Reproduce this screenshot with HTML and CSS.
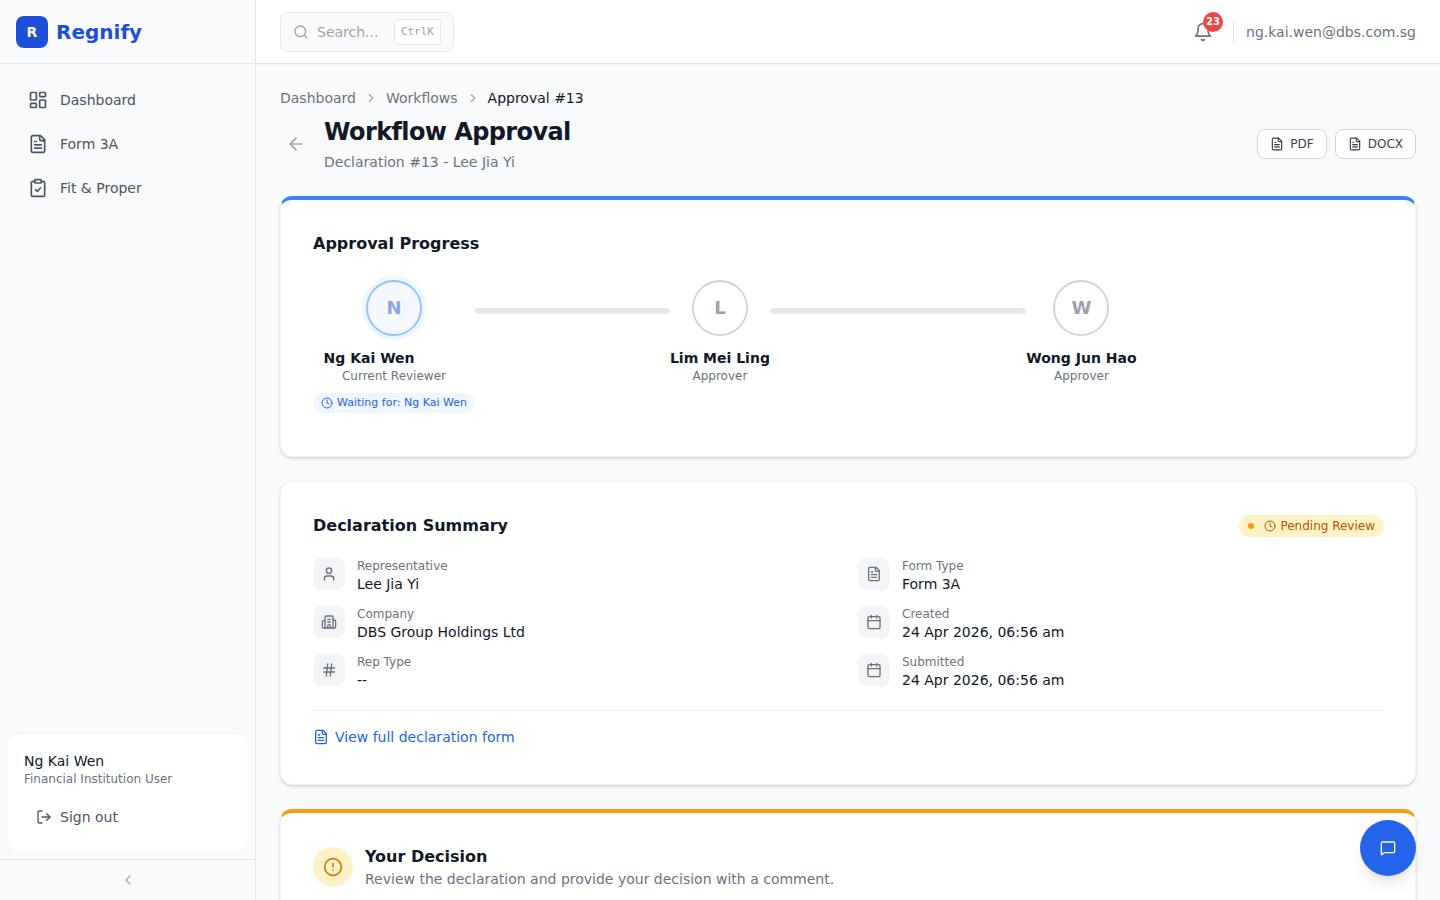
FILE: index.html
```html
<!DOCTYPE html>
<html lang="en">
<head>
    <meta charset="UTF-8">
    <meta name="viewport" content="width=device-width, initial-scale=1.0">
    <title>Workflow Approval | Regnify</title>
    <link rel="stylesheet" href="styles.css">
</head>
<body>
    <svg class="sprite" aria-hidden="true">
        <symbol id="i-dashboard" viewBox="0 0 24 24"><rect x="3" y="3" width="7" height="9" rx="1"/><rect x="14" y="3" width="7" height="5" rx="1"/><rect x="14" y="12" width="7" height="9" rx="1"/><rect x="3" y="16" width="7" height="5" rx="1"/></symbol>
        <symbol id="i-file" viewBox="0 0 24 24"><path d="M15 2H6a2 2 0 0 0-2 2v16a2 2 0 0 0 2 2h12a2 2 0 0 0 2-2V7Z"/><path d="M14 2v4a2 2 0 0 0 2 2h4"/><path d="M10 9H8"/><path d="M16 13H8"/><path d="M16 17H8"/></symbol>
        <symbol id="i-clipboard" viewBox="0 0 24 24"><rect x="8" y="2" width="8" height="4" rx="1"/><path d="M16 4h2a2 2 0 0 1 2 2v14a2 2 0 0 1-2 2H6a2 2 0 0 1-2-2V6a2 2 0 0 1 2-2h2"/><path d="m9 14 2 2 4-4"/></symbol>
        <symbol id="i-search" viewBox="0 0 24 24"><circle cx="11" cy="11" r="8"/><path d="m21 21-4.3-4.3"/></symbol>
        <symbol id="i-bell" viewBox="0 0 24 24"><path d="M6 8a6 6 0 0 1 12 0c0 7 3 9 3 9H3s3-2 3-9"/><path d="M10.3 21a1.94 1.94 0 0 0 3.4 0"/></symbol>
        <symbol id="i-arrow" viewBox="0 0 24 24"><path d="m12 19-7-7 7-7"/><path d="M19 12H5"/></symbol>
        <symbol id="i-right" viewBox="0 0 24 24"><path d="m9 18 6-6-6-6"/></symbol>
        <symbol id="i-left" viewBox="0 0 24 24"><path d="m15 18-6-6 6-6"/></symbol>
        <symbol id="i-clock" viewBox="0 0 24 24"><circle cx="12" cy="12" r="10"/><path d="M12 6v6l4 2"/></symbol>
        <symbol id="i-user" viewBox="0 0 24 24"><path d="M19 21v-2a4 4 0 0 0-4-4H9a4 4 0 0 0-4 4v2"/><circle cx="12" cy="7" r="4"/></symbol>
        <symbol id="i-building" viewBox="0 0 24 24"><path d="M10 12h4"/><path d="M10 8h4"/><path d="M14 21v-3a2 2 0 0 0-4 0v3"/><path d="M6 10H4a2 2 0 0 0-2 2v7a2 2 0 0 0 2 2h16a2 2 0 0 0 2-2v-8a2 2 0 0 0-2-2h-2"/><path d="M6 21V5a2 2 0 0 1 2-2h8a2 2 0 0 1 2 2v16"/></symbol>
        <symbol id="i-hash" viewBox="0 0 24 24"><path d="M4 9h16"/><path d="M4 15h16"/><path d="M10 3 8 21"/><path d="M16 3l-2 18"/></symbol>
        <symbol id="i-calendar" viewBox="0 0 24 24"><path d="M8 2v4"/><path d="M16 2v4"/><rect x="3" y="4" width="18" height="18" rx="2"/><path d="M3 10h18"/></symbol>
        <symbol id="i-logout" viewBox="0 0 24 24"><path d="M9 21H5a2 2 0 0 1-2-2V5a2 2 0 0 1 2-2h4"/><path d="m16 17 5-5-5-5"/><path d="M21 12H9"/></symbol>
        <symbol id="i-alert" viewBox="0 0 24 24"><circle cx="12" cy="12" r="10"/><path d="M12 8v4"/><path d="M12 16h.01"/></symbol>
        <symbol id="i-message" viewBox="0 0 24 24"><path d="M22 17a2 2 0 0 1-2 2H6.828a2 2 0 0 0-1.414.586l-2.202 2.202A.71.71 0 0 1 2 21.286V5a2 2 0 0 1 2-2h16a2 2 0 0 1 2 2z"/></symbol>
    </svg>

    <div class="layout">
        <aside class="sidebar">
            <div class="brand">
                <div class="brand-mark">R</div>
                <span class="brand-name">Regnify</span>
            </div>
            <nav class="nav">
                <a class="nav-item" href="#"><svg class="icon icon-20"><use href="#i-dashboard"/></svg>Dashboard</a>
                <a class="nav-item" href="#"><svg class="icon icon-20"><use href="#i-file"/></svg>Form 3A</a>
                <a class="nav-item" href="#"><svg class="icon icon-20"><use href="#i-clipboard"/></svg>Fit &amp; Proper</a>
            </nav>
            <div class="user-card">
                <div class="user-name">Ng Kai Wen</div>
                <div class="user-role">Financial Institution User</div>
                <a class="sign-out" href="#"><svg class="icon icon-16"><use href="#i-logout"/></svg>Sign out</a>
            </div>
            <div class="collapse"><svg class="icon icon-16"><use href="#i-left"/></svg></div>
        </aside>

        <div class="content">
            <header class="topbar">
                <div class="search">
                    <svg class="icon icon-16"><use href="#i-search"/></svg>
                    <span class="search-text">Search...</span>
                    <kbd class="search-key">CtrlK</kbd>
                </div>
                <div class="topbar-right">
                    <div class="bell">
                        <svg class="icon icon-20"><use href="#i-bell"/></svg>
                        <span class="bell-count">23</span>
                    </div>
                    <div class="topbar-divider"></div>
                    <span class="topbar-email">ng.kai.wen@dbs.com.sg</span>
                </div>
            </header>

            <main class="main">
                <div class="breadcrumb">
                    <a href="#">Dashboard</a>
                    <svg class="icon icon-14"><use href="#i-right"/></svg>
                    <a href="#">Workflows</a>
                    <svg class="icon icon-14"><use href="#i-right"/></svg>
                    <span class="breadcrumb-current">Approval #13</span>
                </div>

                <div class="page-head">
                    <button class="back-btn"><svg class="icon icon-20"><use href="#i-arrow"/></svg></button>
                    <div class="page-title">
                        <h1>Workflow Approval</h1>
                        <p>Declaration #13 - Lee Jia Yi</p>
                    </div>
                    <div class="export">
                        <button class="export-btn"><svg class="icon icon-14"><use href="#i-file"/></svg>PDF</button>
                        <button class="export-btn"><svg class="icon icon-14"><use href="#i-file"/></svg>DOCX</button>
                    </div>
                </div>

                <section class="card card-blue">
                    <h2>Approval Progress</h2>
                    <div class="stepper">
                        <div class="step step-current">
                            <div class="avatar avatar-current">N</div>
                            <div class="step-name">Ng Kai Wen</div>
                            <div class="step-role">Current Reviewer</div>
                            <div class="waiting"><svg class="icon icon-12"><use href="#i-clock"/></svg>Waiting for: Ng Kai Wen</div>
                        </div>
                        <div class="connector connector-a"></div>
                        <div class="step">
                            <div class="avatar">L</div>
                            <div class="step-name">Lim Mei Ling</div>
                            <div class="step-role">Approver</div>
                        </div>
                        <div class="connector connector-b"></div>
                        <div class="step">
                            <div class="avatar">W</div>
                            <div class="step-name">Wong Jun Hao</div>
                            <div class="step-role">Approver</div>
                        </div>
                    </div>
                </section>

                <section class="card">
                    <div class="summary-head">
                        <h2>Declaration Summary</h2>
                        <span class="status"><span class="status-dot"></span><svg class="icon icon-12"><use href="#i-clock"/></svg>Pending Review</span>
                    </div>
                    <div class="summary-grid">
                        <div class="field">
                            <div class="field-icon"><svg class="icon icon-16"><use href="#i-user"/></svg></div>
                            <div><div class="field-label">Representative</div><div class="field-value">Lee Jia Yi</div></div>
                        </div>
                        <div class="field">
                            <div class="field-icon"><svg class="icon icon-16"><use href="#i-file"/></svg></div>
                            <div><div class="field-label">Form Type</div><div class="field-value">Form 3A</div></div>
                        </div>
                        <div class="field">
                            <div class="field-icon"><svg class="icon icon-16"><use href="#i-building"/></svg></div>
                            <div><div class="field-label">Company</div><div class="field-value">DBS Group Holdings Ltd</div></div>
                        </div>
                        <div class="field">
                            <div class="field-icon"><svg class="icon icon-16"><use href="#i-calendar"/></svg></div>
                            <div><div class="field-label">Created</div><div class="field-value">24 Apr 2026, 06:56 am</div></div>
                        </div>
                        <div class="field">
                            <div class="field-icon"><svg class="icon icon-16"><use href="#i-hash"/></svg></div>
                            <div><div class="field-label">Rep Type</div><div class="field-value">--</div></div>
                        </div>
                        <div class="field">
                            <div class="field-icon"><svg class="icon icon-16"><use href="#i-calendar"/></svg></div>
                            <div><div class="field-label">Submitted</div><div class="field-value">24 Apr 2026, 06:56 am</div></div>
                        </div>
                    </div>
                    <div class="summary-foot">
                        <a class="form-link" href="#"><svg class="icon icon-16"><use href="#i-file"/></svg>View full declaration form</a>
                    </div>
                </section>

                <section class="card card-amber">
                    <div class="decision">
                        <div class="decision-icon"><svg class="icon icon-20"><use href="#i-alert"/></svg></div>
                        <div>
                            <h2>Your Decision</h2>
                            <p>Review the declaration and provide your decision with a comment.</p>
                        </div>
                    </div>
                </section>
            </main>
        </div>
    </div>

    <button class="chat-btn"><svg class="icon icon-16"><use href="#i-message"/></svg></button>
</body>
</html>
```

FILE: styles.css
```css
* {
    box-sizing: border-box;
}
html, body {
    height: 100%;
}
body {
    margin: 0;
    overflow: hidden;
    font-family: "DejaVu Sans", sans-serif;
    font-size: 14px;
    line-height: 20px;
    color: #111827;
    background-color: #f9fafb;
}
a {
    color: inherit;
    text-decoration: none;
}
button {
    font-family: inherit;
    cursor: pointer;
}
h1, h2, p {
    margin: 0;
}
.sprite {
    display: none;
}
.icon {
    flex: none;
    display: block;
    fill: none;
    stroke: currentColor;
    stroke-width: 2;
    stroke-linecap: round;
    stroke-linejoin: round;
}
.icon-12 { width: 12px; height: 12px; }
.icon-14 { width: 14px; height: 14px; }
.icon-16 { width: 16px; height: 16px; }
.icon-20 { width: 20px; height: 20px; }

.layout {
    display: flex;
    height: 100vh;
}

/* sidebar */
.sidebar {
    width: 256px;
    flex: none;
    display: flex;
    flex-direction: column;
    background-color: #f9fafb;
    border-right: 1px solid #e5e7eb;
}
.brand {
    height: 64px;
    flex: none;
    display: flex;
    align-items: center;
    gap: 8px;
    padding: 0 16px;
    border-bottom: 1px solid #e5e7eb;
}
.brand-mark {
    width: 32px;
    height: 32px;
    display: flex;
    align-items: center;
    justify-content: center;
    border-radius: 8px;
    background-color: #1d4ed8;
    color: #fff;
    font-weight: bold;
}
.brand-name {
    font-size: 20px;
    line-height: 28px;
    font-weight: bold;
    color: #1d4ed8;
}
.nav {
    flex: 1;
    display: flex;
    flex-direction: column;
    gap: 4px;
    padding: 16px 16px 0;
}
.nav-item {
    height: 40px;
    display: flex;
    align-items: center;
    gap: 12px;
    padding: 0 12px;
    color: #4b5563;
}
.user-card {
    margin: 0 8px 8px;
    padding: 17px 16px 16px;
    height: 117px;
    background-color: #fff;
    border-radius: 12px;
    box-shadow: 0 -1px 0 #f3f4f6;
}
.user-name {
    color: #111827;
}
.user-role {
    font-size: 12px;
    line-height: 16px;
    color: #6b7280;
}
.sign-out {
    display: flex;
    align-items: center;
    gap: 8px;
    height: 40px;
    margin-top: 10px;
    padding: 0 12px;
    color: #4b5563;
}
.collapse {
    height: 41px;
    flex: none;
    display: flex;
    align-items: center;
    justify-content: center;
    border-top: 1px solid #e5e7eb;
    color: #9ca3af;
}

/* top bar */
.content {
    flex: 1;
    min-width: 0;
    display: flex;
    flex-direction: column;
}
.topbar {
    height: 64px;
    flex: none;
    display: flex;
    align-items: center;
    justify-content: space-between;
    padding: 0 24px;
    background-color: #fff;
    border-bottom: 1px solid #e5e7eb;
    box-shadow: 0 1px 2px rgba(0, 0, 0, 0.05);
    position: relative;
}
.search {
    width: 174px;
    height: 40px;
    display: flex;
    align-items: center;
    padding: 0 12px;
    background-color: #f9fafb;
    border: 1px solid #e5e7eb;
    border-radius: 8px;
    color: #9ca3af;
}
.search-text {
    margin-left: 8px;
    flex: 1;
}
.search-key {
    height: 26px;
    display: flex;
    align-items: center;
    padding: 0 6px;
    background-color: #fff;
    border: 1px solid #e5e7eb;
    border-radius: 4px;
    font-family: "DejaVu Sans Mono", monospace;
    font-size: 11px;
}
.topbar-right {
    display: flex;
    align-items: center;
}
.bell {
    position: relative;
    color: #6b7280;
}
.bell-count {
    position: absolute;
    top: -10px;
    right: -10px;
    width: 20px;
    height: 20px;
    display: flex;
    align-items: center;
    justify-content: center;
    border-radius: 50%;
    background-color: #ef4444;
    color: #fff;
    font-size: 10px;
    font-weight: bold;
}
.topbar-divider {
    width: 1px;
    height: 24px;
    margin: 0 12px 0 20px;
    background-color: #e5e7eb;
}
.topbar-email {
    color: #6b7280;
}

/* page head */
.main {
    flex: 1;
    min-height: 0;
    overflow: hidden;
    padding: 24px;
}
.breadcrumb {
    display: flex;
    align-items: center;
    gap: 8px;
    color: #6b7280;
    margin-bottom: 8px;
}
.breadcrumb .icon {
    color: #9ca3af;
}
.breadcrumb-current {
    color: #111827;
}
.page-head {
    display: flex;
    align-items: center;
    gap: 12px;
    margin-bottom: 24px;
}
.back-btn {
    width: 32px;
    height: 32px;
    display: flex;
    align-items: center;
    justify-content: center;
    padding: 0;
    border: none;
    background: none;
    color: #9ca3af;
}
.page-title {
    flex: 1;
}
.page-title h1 {
    font-size: 24px;
    line-height: 32px;
    font-weight: bold;
    letter-spacing: -0.6px;
    color: #111827;
    margin-bottom: 4px;
}
.page-title p {
    color: #6b7280;
}
.export {
    display: flex;
    gap: 8px;
}
.export-btn {
    height: 30px;
    display: flex;
    align-items: center;
    gap: 6px;
    padding: 0 12px;
    background-color: #fff;
    border: 1px solid #d1d5db;
    border-radius: 8px;
    font-size: 12px;
    color: #374151;
}

/* cards */
.card {
    background-color: #fff;
    border: 1px solid #f3f4f6;
    border-radius: 12px;
    box-shadow: 0 1px 3px rgba(0, 0, 0, 0.1), 0 2px 4px -1px rgba(0, 0, 0, 0.1);
    padding: 32px;
    margin-bottom: 24px;
}
.card-blue {
    border-top: 4px solid #3b82f6;
}
.card-amber {
    border-top: 4px solid #f59e0b;
}
.card h2 {
    font-size: 16px;
    line-height: 24px;
    font-weight: bold;
    color: #111827;
}

/* stepper */
.stepper {
    display: flex;
    align-items: flex-start;
    margin-top: 24px;
    padding-bottom: 11px;
}
.step {
    display: flex;
    flex-direction: column;
    align-items: center;
}
.avatar {
    width: 56px;
    height: 56px;
    display: flex;
    align-items: center;
    justify-content: center;
    margin-bottom: 12px;
    background-color: #fff;
    border: 2px solid #d1d5db;
    border-radius: 50%;
    font-size: 18px;
    font-weight: bold;
    color: #9ca3af;
}
.avatar-current {
    background-color: #f5f9ff;
    border-color: #93c5fd;
    box-shadow: 0 0 0 4px rgba(219, 234, 254, 0.4), 0 4px 6px rgba(59, 130, 246, 0.05);
    color: #8fa4e8;
}
.step-name {
    font-weight: bold;
    color: #111827;
}
.step-current .step-name {
    align-self: flex-start;
    margin-left: 10.6px;
}
.step-role {
    font-size: 12px;
    line-height: 16px;
    color: #6b7280;
}
.waiting {
    display: flex;
    align-items: center;
    gap: 4px;
    height: 20px;
    margin-top: 9px;
    padding: 0 8px;
    background-color: #eff6ff;
    border-radius: 10px;
    font-size: 11px;
    color: #2563eb;
}
.connector {
    height: 6px;
    margin-top: 28px;
    background-color: #e5e7eb;
    border-radius: 3px;
}
.connector-a {
    width: 195px;
}
.connector-b {
    width: 256.4px;
}

/* summary */
.summary-head {
    display: flex;
    align-items: center;
    justify-content: space-between;
    margin-bottom: 20px;
}
.status {
    display: flex;
    align-items: center;
    height: 22px;
    margin-right: -1px;
    padding: 0 9px;
    background-color: #fef3c7;
    border-radius: 11px;
    font-size: 12px;
    color: #b45309;
}
.status-dot {
    width: 6px;
    height: 6px;
    margin-right: 10px;
    border-radius: 50%;
    background-color: #f59e0b;
}
.status .icon {
    margin-right: 4px;
}
.summary-grid {
    display: grid;
    grid-template-columns: 1fr 1fr;
    gap: 12px 20px;
}
.field {
    display: flex;
    align-items: flex-start;
    gap: 12px;
}
.field-icon {
    width: 32px;
    height: 32px;
    flex: none;
    display: flex;
    align-items: center;
    justify-content: center;
    background-color: #f3f4f6;
    border-radius: 8px;
    color: #6b7280;
}
.field-label {
    font-size: 12px;
    line-height: 16px;
    color: #6b7280;
}
.field-value {
    color: #111827;
}
.summary-foot {
    margin-top: 20px;
    padding-top: 16px;
    padding-bottom: 5px;
    border-top: 1px solid #f3f4f6;
}
.form-link {
    display: flex;
    align-items: center;
    gap: 6px;
    color: #2563eb;
}

/* decision */
.decision {
    display: flex;
    align-items: center;
    gap: 12px;
}
.decision-icon {
    width: 40px;
    height: 40px;
    flex: none;
    display: flex;
    align-items: center;
    justify-content: center;
    background-color: #fef3c7;
    border-radius: 50%;
    color: #d97706;
}
.decision p {
    color: #6b7280;
}

.chat-btn {
    position: fixed;
    right: 24px;
    bottom: 24px;
    width: 56px;
    height: 56px;
    display: flex;
    align-items: center;
    justify-content: center;
    padding: 0;
    border: none;
    border-radius: 50%;
    background-color: #2563eb;
    color: #fff;
    box-shadow: 0 10px 15px -3px rgba(0, 0, 0, 0.1), 0 4px 6px -4px rgba(0, 0, 0, 0.1);
}
```
